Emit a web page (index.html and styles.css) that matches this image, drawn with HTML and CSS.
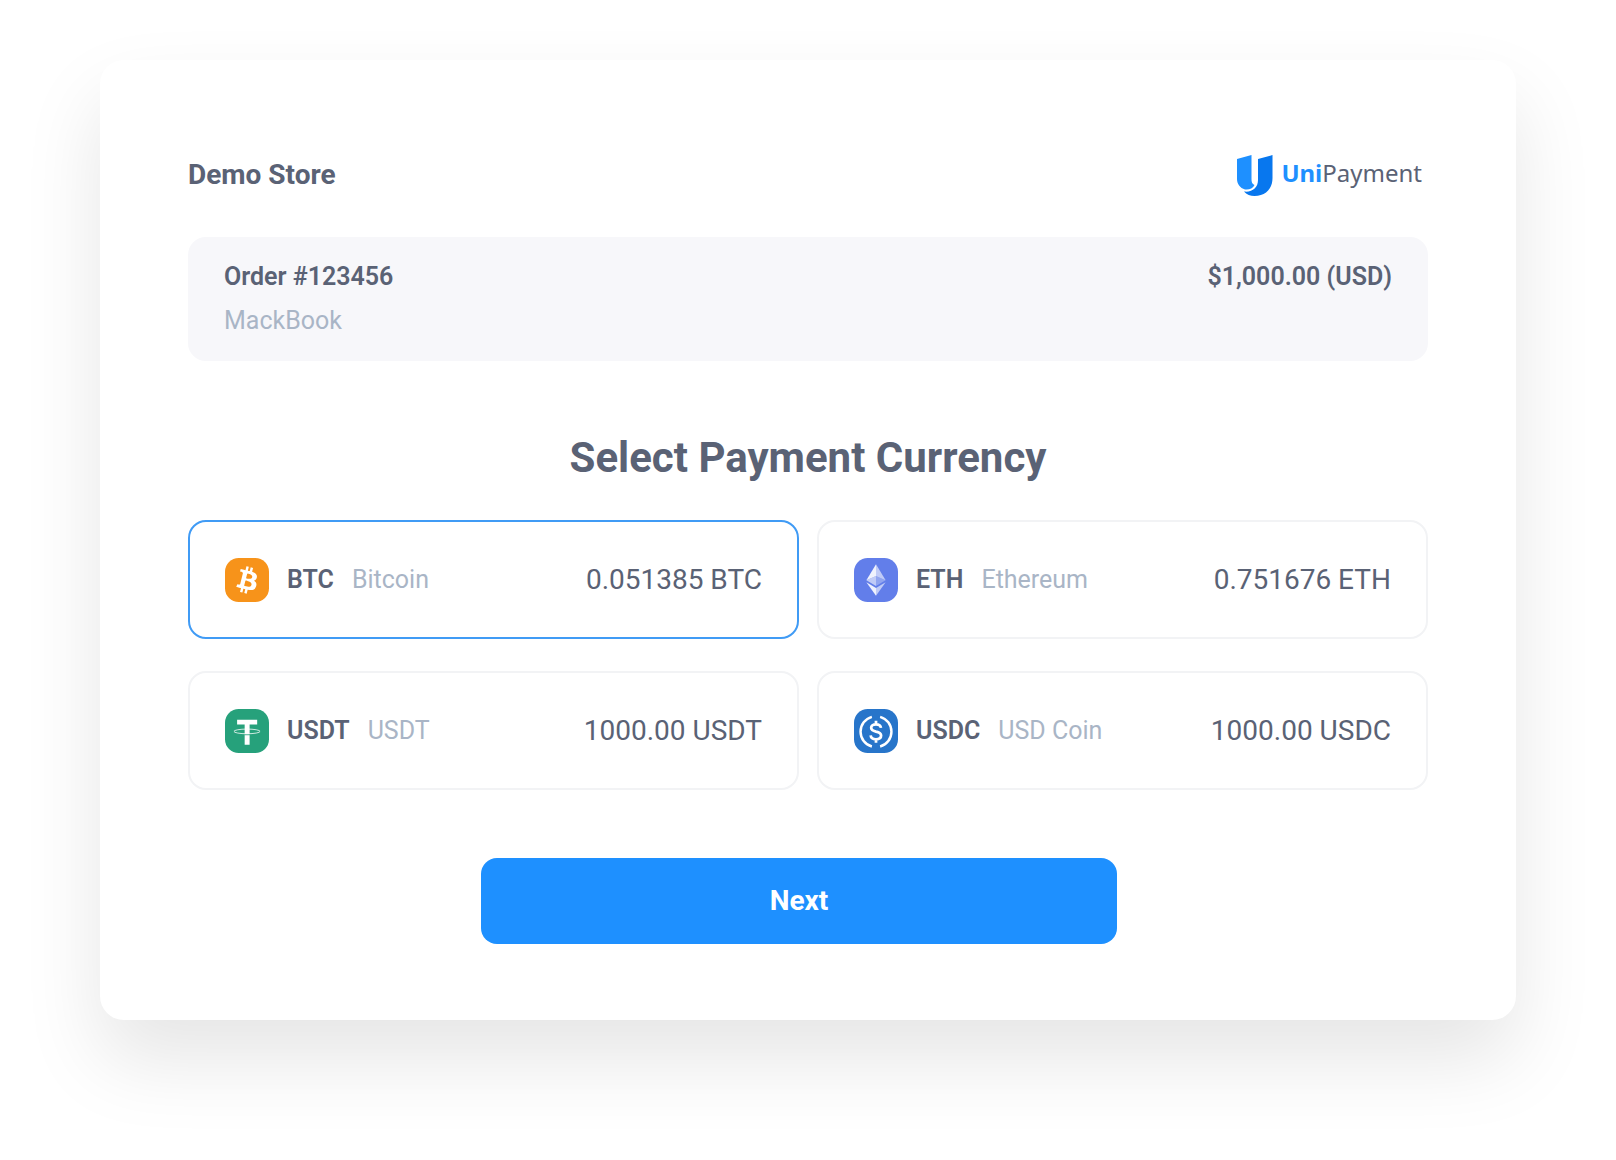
FILE: index.html
```html
<!DOCTYPE html>
<html lang="en">
<head>
    <meta charset="UTF-8">
    <meta name="viewport" content="width=device-width, initial-scale=1.0">
    <title>UniPayment Checkout</title>
    <link rel="stylesheet" href="styles.css">
</head>
<body>
    <main class="checkout">
        <header class="header">
            <div class="store-name">Demo Store</div>
            <div class="logo">
                <svg class="logo-mark" viewBox="0 0 36 42" aria-hidden="true">
                    <path fill="#1e90ff" d="M0 5 14.500 1V25c0 3 .5 5 3 6C16 34.500 12 36 8 35.500 3 34 0 30 0 25z"/>
                    <path fill="#0877ee" d="M21 5 35.500 1V24c0 11-7 18-18 18-4 0-8-1.500-10.500-4.500C15 38.500 21 34 21 26z"/>
                </svg>
                <span class="logo-text"><b>Uni</b>Payment</span>
            </div>
        </header>

        <section class="order">
            <div>
                <div class="order-id">Order #123456</div>
                <div class="order-item">MackBook</div>
            </div>
            <div class="order-total">$1,000.00 (USD)</div>
        </section>

        <form>
            <h1>Select Payment Currency</h1>
            <div class="currencies">
                <label class="currency">
                    <input type="radio" name="currency" value="BTC" checked>
                    <svg class="coin" viewBox="0 0 32 32" aria-hidden="true">
                        <rect width="32" height="32" rx="10" fill="#f7931a"/>
                        <path fill="#fff" d="M23.189 14.02c.314-2.096-1.283-3.223-3.465-3.975l.708-2.84-1.728-.43-.69 2.765c-.454-.114-.92-.22-1.385-.326l.695-2.783L15.596 6l-.708 2.839c-.376-.086-.746-.17-1.104-.26l.002-.009-2.384-.595-.46 1.846s1.283.294 1.256.312c.7.175.826.638.805 1.006l-.806 3.235c.048.012.11.03.18.057l-.183-.045-1.13 4.532c-.086.212-.303.531-.793.41.018.025-1.256-.313-1.256-.313l-.858 1.978 2.25.561c.418.105.828.215 1.231.318l-.715 2.872 1.727.43.708-2.84c.472.127.93.245 1.378.357l-.706 2.828 1.728.43.715-2.866c2.948.558 5.164.333 6.097-2.333.752-2.146-.037-3.385-1.588-4.192 1.13-.26 1.98-1.003 2.207-2.538zm-3.95 5.538c-.533 2.147-4.148.986-5.32.695l.95-3.805c1.172.293 4.929.872 4.37 3.11zm.535-5.569c-.487 1.953-3.495.96-4.47.717l.86-3.45c.975.243 4.118.696 3.61 2.733z"/>
                    </svg>
                    <span class="code">BTC</span>
                    <span class="name">Bitcoin</span>
                    <span class="amount">0.051385 BTC</span>
                </label>
                <label class="currency">
                    <input type="radio" name="currency" value="ETH">
                    <svg class="coin" viewBox="0 0 32 32" aria-hidden="true">
                        <rect width="32" height="32" rx="10" fill="#627eea"/>
                        <g fill="#fff">
                            <path fill-opacity=".6" d="M16 4.500v8.600l7 3.100z"/>
                            <path fill-opacity=".9" d="M16 4.500 9 16.200l7-3.100z"/>
                            <path fill-opacity=".6" d="M16 21.800v5.700l7-9.900z"/>
                            <path fill-opacity=".9" d="M16 27.500v-5.700l-7-4.200z"/>
                            <path fill-opacity=".3" d="m16 20.400 7-4.200-7-3.100z"/>
                            <path fill-opacity=".6" d="m9 16.200 7 4.200v-7.300z"/>
                        </g>
                    </svg>
                    <span class="code">ETH</span>
                    <span class="name">Ethereum</span>
                    <span class="amount">0.751676 ETH</span>
                </label>
                <label class="currency">
                    <input type="radio" name="currency" value="USDT">
                    <svg class="coin" viewBox="0 0 32 32" aria-hidden="true">
                        <rect width="32" height="32" rx="10" fill="#26a17b"/>
                        <path fill="#fff" d="M8.800 7.800h14.600v3.400h-5.500V26h-3.600V11.200H8.800z"/>
                        <path fill="none" stroke="#26a17b" stroke-width=".7" d="M14 18.700h4.200"/>
                        <ellipse cx="16" cy="16.300" rx="9.500" ry="1.700" fill="none" stroke="#fff" stroke-opacity=".8" stroke-width=".7"/>
                    </svg>
                    <span class="code">USDT</span>
                    <span class="name">USDT</span>
                    <span class="amount">1000.00 USDT</span>
                </label>
                <label class="currency">
                    <input type="radio" name="currency" value="USDC">
                    <svg class="coin" viewBox="0 0 32 32" aria-hidden="true">
                        <rect width="32" height="32" rx="10" fill="#2775ca"/>
                        <g fill="none" stroke="#fff" stroke-width="1.800">
                            <path d="M13 5.700a11.200 11.200 0 0 0 0 21.600M19 5.700a11.200 11.200 0 0 1 0 21.600"/>
                            <path stroke-width="2" d="M19.600 13.700c-.2-1.700-1.500-2.600-3.600-2.600-2.200 0-3.500 1-3.500 2.600 0 1.800 1.500 2.300 3.500 2.700 2.300.4 3.700 1.100 3.700 2.900 0 1.700-1.500 2.700-3.700 2.700s-3.700-1-3.900-2.800M16 8.500v2.800M16 21.700v2.800"/>
                        </g>
                    </svg>
                    <span class="code">USDC</span>
                    <span class="name">USD Coin</span>
                    <span class="amount">1000.00 USDC</span>
                </label>
            </div>
            <div class="actions">
                <button type="submit">Next</button>
            </div>
        </form>
    </main>
</body>
</html>
```
FILE: styles.css
```css
:root {
    --color-text: #5a6275;
    --color-muted: #a9b5c6;
    --color-blue: #1e90ff;
    --color-panel: #f7f7fa;
    --color-border: #f2f3f5;
}

* {
    box-sizing: border-box;
}

body {
    font-family: Roboto, 'Liberation Sans', sans-serif;
    margin: 0;
    min-height: 100vh;
    background: #fff;
    color: var(--color-text);
    padding: 60px 100px;
}

.checkout {
    background: #fff;
    border-radius: 24px;
    padding: 94px 88px 76px;
    box-shadow: 0 40px 80px rgba(0, 0, 0, 0.1);
}

.header {
    display: flex;
    justify-content: space-between;
    align-items: center;
    padding-right: 6px;
}

.store-name {
    font-size: 28px;
    font-weight: 700;
    line-height: 40px;
}

.logo {
    display: flex;
    align-items: center;
    gap: 8px;
}

.logo-mark {
    width: 36px;
    height: 42px;
}

.logo-text {
    font-family: 'Noto Sans', sans-serif;
    font-size: 24px;
    line-height: 38px;
    padding-bottom: 4px;
}

.logo-text b {
    color: var(--color-blue);
}

.order {
    display: flex;
    justify-content: space-between;
    margin-top: 41px;
    padding: 18px 36px;
    border-radius: 18px;
    background: var(--color-panel);
    font-size: 25px;
    line-height: 44px;
}

.order-id,
.order-total {
    font-weight: 600;
}

.order-item {
    color: var(--color-muted);
}

h1 {
    margin: 72px 0 37px;
    font-size: 42px;
    font-weight: 700;
    line-height: 50px;
    text-align: center;
}

.currencies {
    display: grid;
    grid-template-columns: 1fr 1fr;
    gap: 32px 18px;
}

.currency {
    display: flex;
    align-items: center;
    gap: 18px;
    min-height: 119px;
    padding: 0 35px;
    border: 2px solid var(--color-border);
    border-radius: 18px;
    font-size: 25px;
    cursor: pointer;
}

.currency:has(input:checked) {
    border-color: #409bf5;
}

.currency input {
    appearance: none;
    position: absolute;
    margin: 0;
}

.coin {
    width: 44px;
    height: 44px;
}

.code {
    font-weight: 600;
}

.name {
    color: var(--color-muted);
}

.amount {
    margin-left: auto;
    font-size: 28px;
}

.actions {
    display: flex;
    justify-content: center;
    margin-top: 68px;
    padding-right: 18px;
}

button {
    width: 52%;
    padding: 24px;
    border: none;
    border-radius: 16px;
    background: var(--color-blue);
    color: #fff;
    font-family: inherit;
    font-size: 28px;
    font-weight: 700;
    line-height: 38px;
    cursor: pointer;
}
```
